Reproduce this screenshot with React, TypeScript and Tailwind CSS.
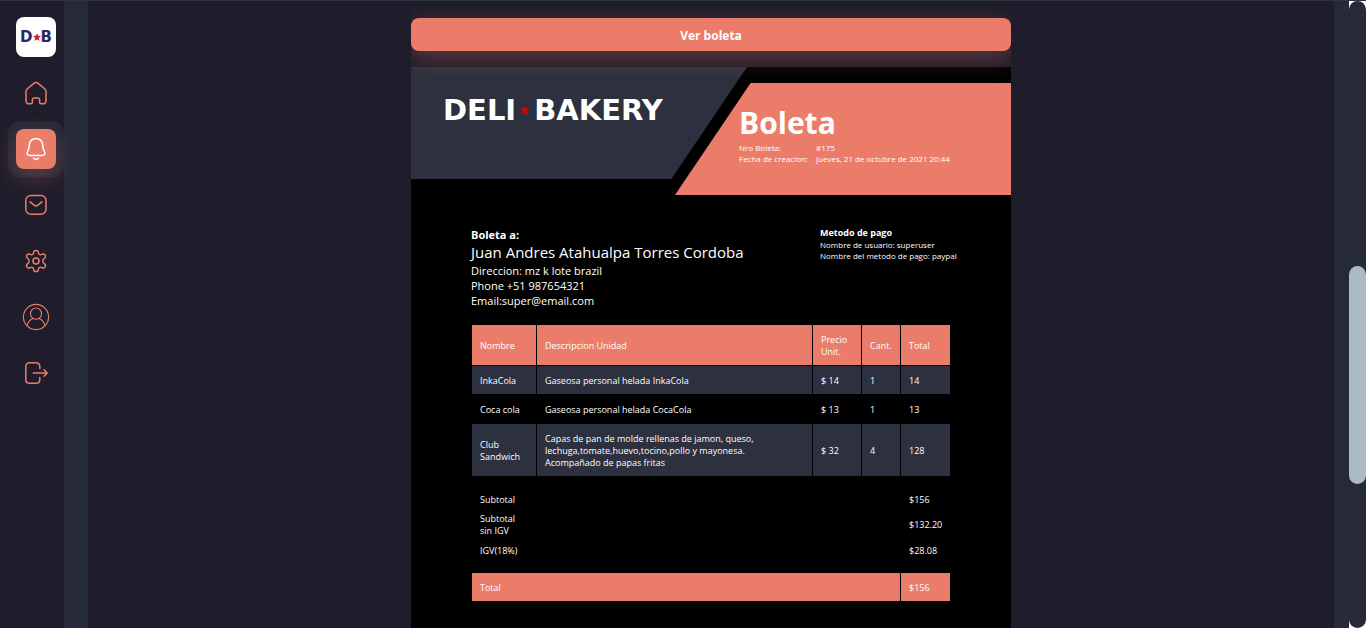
import type { ReactNode } from "react";

const items = [
  { name: "InkaCola", text: "Gaseosa personal helada InkaCola", price: "$ 14", count: 1, total: 14 },
  { name: "Coca cola", text: "Gaseosa personal helada CocaCola", price: "$ 13", count: 1, total: 13 },
  {
    name: "Club Sandwich",
    text: "Capas de pan de molde rellenas de jamon, queso, lechuga,tomate,huevo,tocino,pollo y mayonesa. Acompañado de papas fritas",
    price: "$ 32",
    count: 4,
    total: 128,
  },
];

function Icon({ children, thin }: { children: ReactNode; thin?: boolean }) {
  return (
    <svg
      viewBox="0 0 28 28"
      className="size-7"
      fill="none"
      stroke="currentColor"
      strokeWidth={thin ? 1.1 : 1.5}
      strokeLinecap="round"
      strokeLinejoin="round"
      aria-hidden="true"
    >
      {children}
    </svg>
  );
}

const links = [
  {
    label: "Inicio",
    icon: (
      <Icon>
        <path d="M4 12.800c0-1.200.5-2.200 1.400-3l6.200-5.200c1.400-1.200 3.400-1.200 4.800 0l6.200 5.200c.9.8 1.400 1.800 1.400 3v8.600c0 2-1.200 3.400-3.200 3.400h-1.600c-.9 0-1.600-.7-1.600-1.600v-2.400c0-1-.8-1.800-1.800-1.800h-3.600c-1 0-1.800.8-1.800 1.800v2.400c0 .9-.7 1.600-1.600 1.600H7.200C5.200 24.800 4 23.400 4 21.400z" />
      </Icon>
    ),
  },
  {
    label: "Notificaciones",
    active: true,
    icon: (
      <Icon>
        <path d="M14 3.500c-4 0-6.700 2.900-6.700 6.500 0 3.600-.6 4.500-1.700 6.300-1.300 2.200-.3 4.100 2.400 4.100h12c2.700 0 3.700-1.900 2.400-4.100-1.100-1.800-1.700-2.700-1.700-6.300 0-3.600-2.700-6.500-6.700-6.500z" />
        <path d="M11.500 23.200c1.400 1.300 3.600 1.300 5 0" />
      </Icon>
    ),
  },
  {
    label: "Mensajes",
    icon: (
      <Icon>
        <rect x="3.800" y="4.600" width="20.200" height="18.600" rx="5" />
        <path d="m8 10.800 4.200 3.400c1.100.9 2.500.9 3.600 0l4.200-3.400" />
      </Icon>
    ),
  },
  {
    label: "Ajustes",
    icon: (
      <Icon>
        <path d="M11.700 5.300C11.700 4.200 12.700 3.500 14 3.500s2.300.7 2.300 1.800c0 2 1.700 3 3.500 2.100 1.500-.9 2.600-.5 3.300.7.800 1.300.5 2.500-.8 3.200-1.900 1.100-1.900 4.300 0 5.400 1.300.7 1.600 1.900.8 3.200-.7 1.200-1.800 1.600-3.300.7-1.800-.9-3.500.1-3.500 2.100 0 1.100-1 1.800-2.300 1.800s-2.300-.7-2.300-1.800c0-2-1.700-3-3.500-2.100-1.500.9-2.600.5-3.300-.7-.8-1.300-.5-2.500.8-3.200 1.900-1.100 1.900-4.300 0-5.400-1.300-.7-1.600-1.900-.8-3.200.7-1.200 1.800-1.600 3.300-.7 1.800.9 3.500-.1 3.500-2.100z" />
        <circle cx="14" cy="14" r="3" />
      </Icon>
    ),
  },
  {
    label: "Perfil",
    icon: (
      <Icon thin>
        <circle cx="14" cy="14" r="12.600" />
        <circle cx="14" cy="10.600" r="5.600" />
        <path d="M5 22.600c1.200-4.200 3.300-6.100 6.200-7.100M23 22.600c-1.200-4.200-3.300-6.100-6.200-7.100" />
      </Icon>
    ),
  },
  {
    label: "Salir",
    icon: (
      <Icon>
        <path d="M17.800 9.500V7.600c0-2.500-1.300-3.900-3.900-3.900H7.700C5.100 3.700 3.800 5.100 3.800 7.600v12.800c0 2.500 1.300 3.900 3.900 3.900h6.200c2.600 0 3.900-1.400 3.900-3.900v-1.900" />
        <path d="M11.300 14h13.500M22 10.700l3.200 3.300-3.200 3.300" />
      </Icon>
    ),
  },
];

function Star({ className }: { className: string }) {
  return (
    <svg viewBox="0 0 10 10" className={className} aria-hidden="true">
      <path fill="currentColor" d="M5 .2 6.500 3.300 9.900 3.700 7.400 6.100 8.100 9.700 5 8 1.900 9.700 2.600 6.100.1 3.700 3.500 3.300z" />
    </svg>
  );
}

function Sidebar() {
  return (
    <nav className="flex w-16 shrink-0 flex-col items-end bg-[#1f1d2b] pt-2">
      <a
        href="#inicio"
        aria-label="Deli Bakery"
        className="m-2 flex size-10 items-center justify-center rounded-lg bg-white font-['DejaVu_Sans',sans-serif] text-[15px] leading-none font-bold text-[#2b2963]"
      >
        D
        <Star className="size-2 shrink-0 text-[#d8232f]" />
        B
      </a>
      {links.map((link) => (
        <a
          key={link.label}
          href="#seccion"
          aria-label={link.label}
          className={link.active ? "flex rounded-xl bg-[#262837] p-2 text-white" : "flex p-2 text-[#ec7c6a]"}
        >
          <span
            className={
              link.active
                ? "flex size-10 items-center justify-center rounded-lg bg-[#ec7c6a] shadow-[0_8px_24px_rgba(234,124,105,0.3)]"
                : "flex size-10 items-center justify-center"
            }
          >
            {link.icon}
          </span>
        </a>
      ))}
    </nav>
  );
}

function InvoiceHeader() {
  return (
    <header className="grid">
      <div className="col-start-1 row-start-1 flex h-28 w-[56%] items-start bg-[#2d303e] px-8 pt-[27px] [clip-path:polygon(0_0,100%_0,77.5%_100%,0_100%)]">
        <p className="flex items-center gap-1 font-['DejaVu_Sans',sans-serif] text-[29px] leading-8 font-bold whitespace-nowrap text-white">
          DELI
          <Star className="size-2.5 text-[#c4090c]" />
          BAKERY
        </p>
      </div>
      <div className="col-start-1 row-start-1 mt-4 h-28 w-[56%] justify-self-end bg-[#ec7c6a] pt-5 pl-16 text-white [clip-path:polygon(22.5%_0,100%_0,100%_100%,0_100%)]">
        <h1 className="text-[30px] leading-[39px] font-bold">Boleta</h1>
        <dl className="grid grid-cols-[77px_1fr] text-[8px] leading-[11px]">
          <dt>Nro Boleta:</dt>
          <dd>#175</dd>
          <dt>Fecha de creacion:</dt>
          <dd>jueves, 21 de octubre de 2021 20:44</dd>
        </dl>
      </div>
    </header>
  );
}

function InvoiceTable() {
  return (
    <table className="mt-4 w-full table-fixed border-separate border-spacing-px text-left text-[9px] leading-3">
      <colgroup>
        <col className="w-16" />
        <col />
        <col className="w-12" />
        <col className="w-[38px]" />
        <col className="w-[49px]" />
      </colgroup>
      <thead>
        <tr className="*:bg-[#ec7c6a] *:px-2 *:pt-[9px] *:pb-[7px] *:font-normal">
          <th>Nombre</th>
          <th>Descripcion Unidad</th>
          <th>Precio Unit.</th>
          <th className="whitespace-nowrap">Cant.</th>
          <th>Total</th>
        </tr>
      </thead>
      <tbody>
        {items.map((item) => (
          <tr key={item.name} className="*:px-2 *:pt-[9px] *:pb-[7px] odd:*:bg-[#2d303e]">
            <td>{item.name}</td>
            <td>
              <p className="max-w-56">{item.text}</p>
            </td>
            <td>{item.price}</td>
            <td>{item.count}</td>
            <td>{item.total}</td>
          </tr>
        ))}
      </tbody>
      <tfoot>
        <tr className="*:px-2 *:pt-[17px] *:pb-[3px]">
          <td>Subtotal</td>
          <td colSpan={3} />
          <td>$156</td>
        </tr>
        <tr className="*:px-2 *:py-[3px]">
          <td>
            Subtotal
            <br />
            sin IGV
          </td>
          <td colSpan={3} />
          <td>$132.20</td>
        </tr>
        <tr className="*:px-2 *:pt-1 *:pb-[15px]">
          <td>IGV(18%)</td>
          <td colSpan={3} />
          <td>$28.08</td>
        </tr>
        <tr className="*:bg-[#ec7c6a] *:px-2 *:pt-[9px] *:pb-[7px]">
          <td colSpan={4}>Total</td>
          <td>$156</td>
        </tr>
      </tfoot>
    </table>
  );
}

export default function App() {
  return (
    <div className="flex h-screen overflow-hidden border-t border-[#2f3341] bg-[#262937] font-['Open_Sans',sans-serif] text-white">
      <Sidebar />
      <main className="mx-6 flex flex-1 justify-center bg-[#1f1d2b]">
        <div className="flex w-[600px] flex-col overflow-hidden pt-[17px]">
          <button className="relative z-10 shrink-0 rounded-lg bg-[#ec7c6a] pt-2 pb-[5px] text-[12px] leading-5 font-bold text-white shadow-[0_8px_24px_rgba(234,124,105,0.3)]">
            Ver boleta
          </button>
          <article className="mt-4 flex-1 bg-black">
            <InvoiceHeader />
            <section className="px-[60px] pt-8">
              <div className="flex justify-between">
                <address className="text-[11px] leading-[15px] not-italic">
                  <p className="font-bold">Boleta a:</p>
                  <h2 className="text-[15px] leading-[21px]">Juan Andres Atahualpa Torres Cordoba</h2>
                  <p>Direccion: mz k lote brazil</p>
                  <p>Phone +51 987654321</p>
                  <p>Email:super@email.com</p>
                </address>
                <div className="w-[131px] text-[8px] leading-[11px] whitespace-nowrap">
                  <h3 className="text-[9px] leading-3 font-bold">Metodo de pago</h3>
                  <p>Nombre de usuario: superuser</p>
                  <p>Nombre del metodo de pago: paypal</p>
                </div>
              </div>
              <InvoiceTable />
            </section>
          </article>
        </div>
      </main>
      <div className="-ml-[9px] flex w-[17px] shrink-0 flex-col bg-white" aria-hidden="true">
        <div className="flex-1 rounded-full bg-[#262937] pt-[265px]">
          <div className="h-[218px] rounded-full bg-[#aabbc2]" />
        </div>
      </div>
    </div>
  );
}
